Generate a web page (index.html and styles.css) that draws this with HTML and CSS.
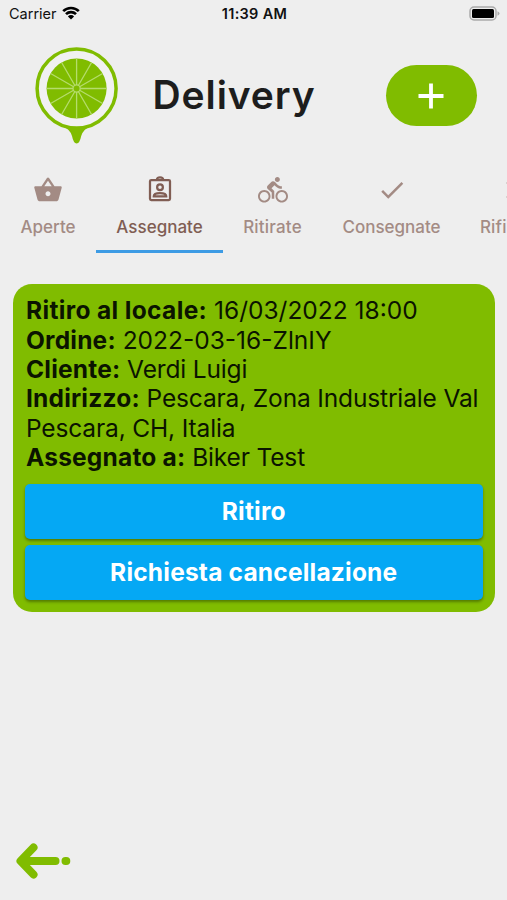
FILE: index.html
```html
<!DOCTYPE html>
<html lang="it">
<head>
    <meta charset="UTF-8">
    <title>Delivery</title>
    <link rel="stylesheet" href="styles.css">
</head>
<body>
    <div class="status-bar">
        <div class="carrier">
            <span>Carrier</span>
            <svg class="wifi" viewBox="0 0 18 14">
                <path d="M1.2 5.2a11 11 0 0 1 15.6 0M4 8.2a7 7 0 0 1 10 0"/>
                <path class="wifi-dot" d="M9 13.6L5.9 10.4a4.4 4.4 0 0 1 6.2 0z"/>
            </svg>
        </div>
        <div class="time">11:39 AM</div>
        <svg class="battery" viewBox="0 0 31 15">
            <rect class="battery-case" x="1" y="1" width="26" height="13" rx="4"/>
            <rect x="3" y="3" width="22" height="9" rx="1.5"/>
            <path class="battery-tip" d="M28.5 5.2q2 .8 2 2.3t-2 2.3z"/>
        </svg>
    </div>

    <header class="header">
        <svg class="logo" viewBox="0 0 84 98">
            <path class="lime" d="M28 79q8 3 10 10 1.500 7.500 4.600 7.500t4.600-7.500q2-7 10-10z"/>
            <circle class="logo-ring" cx="42.600" cy="41.500" r="39.500"/>
            <circle class="lime" cx="42.600" cy="41.500" r="30"/>
            <g class="slices">
                <path d="M42.600 11.500v60M12.600 41.500h60M27.600 15.500l30 52M57.600 15.500l-30 52M16.600 26.500l52 30M16.600 56.500l52-30"/>
                <circle class="lime" cx="42.600" cy="41.500" r="3.600"/>
            </g>
        </svg>
        <h1>Delivery</h1>
        <button class="add" aria-label="Aggiungi">
            <svg viewBox="0 0 26 26"><path d="M13 .5v25M.5 13h25"/></svg>
        </button>
    </header>

    <nav class="tabs">
        <a class="tab tab-aperte">
            <svg viewBox="0 0 24 24"><path d="M17.210 9l-4.380-6.560c-.19-.28-.51-.42-.83-.42-.32 0-.64.14-.83.43L6.790 9H2c-.55 0-1 .45-1 1 0 .09.010.18.040.27l2.540 9.270c.23.84 1 1.460 1.920 1.460h13c.92 0 1.690-.62 1.930-1.460l2.540-9.270L23 10c0-.55-.45-1-1-1h-4.790zM9 9l3-4.400L15 9H9zm3 8c-1.100 0-2-.9-2-2s.9-2 2-2 2 .9 2 2-.9 2-2 2z"/></svg>
            <span>Aperte</span>
        </a>
        <a class="tab tab-assegnate active">
            <svg class="outline" viewBox="0 0 24 24">
                <rect x="4" y="4" width="16" height="16" rx="1"/>
                <path d="M9.500 3.800a2.500 2 0 0 1 5 0"/>
                <circle cx="12" cy="9.700" r="2.300"/>
                <path d="M7 17c0-3.400 10-3.400 10 0z"/>
            </svg>
            <span>Assegnate</span>
        </a>
        <a class="tab tab-ritirate">
            <svg viewBox="0 0 24 24"><path d="M15.500 5.500c1.100 0 2-.9 2-2s-.9-2-2-2-2 .9-2 2 .9 2 2 2zM5 12c-2.800 0-5 2.200-5 5s2.200 5 5 5 5-2.200 5-5-2.200-5-5-5zm0 8.500c-1.900 0-3.500-1.600-3.500-3.500s1.600-3.500 3.500-3.500 3.500 1.600 3.500 3.500-1.600 3.500-3.500 3.500zm5.800-10l2.400-2.400.8.8c1.300 1.300 3 2.100 5.100 2.100V9c-1.500 0-2.700-.6-3.600-1.500l-1.900-1.900c-.5-.4-1-.6-1.600-.6s-1.100.2-1.400.6L7.800 8.400c-.4.4-.6.9-.6 1.400 0 .6.2 1.100.6 1.400L11 14v5h2v-6.200l-2.200-2.300zM19 12c-2.800 0-5 2.200-5 5s2.200 5 5 5 5-2.200 5-5-2.200-5-5-5zm0 8.500c-1.900 0-3.500-1.600-3.500-3.500s1.600-3.500 3.500-3.500 3.500 1.600 3.500 3.500-1.600 3.500-3.500 3.500z"/></svg>
            <span>Ritirate</span>
        </a>
        <a class="tab tab-consegnate">
            <svg viewBox="0 0 24 24"><path d="M9 16.170L4.830 12l-1.420 1.410L9 19 21 7l-1.410-1.410z"/></svg>
            <span>Consegnate</span>
        </a>
        <a class="tab tab-rifiutate">
            <svg viewBox="0 0 24 24"><path d="M19 6.410L17.590 5 12 10.590 6.410 5 5 6.410 10.590 12 5 17.590 6.410 19 12 13.410 17.590 19 19 17.590 13.410 12z"/></svg>
            <span>Rifiutate</span>
        </a>
    </nav>

    <div class="card">
        <div class="info">
            <p class="ritiro"><b>Ritiro al locale:</b> 16/03/2022 18:00</p>
            <p class="ordine"><b>Ordine:</b> 2022-03-16-ZlnIY</p>
            <p class="cliente"><b>Cliente:</b> Verdi Luigi</p>
            <p class="indirizzo"><b>Indirizzo:</b> Pescara, Zona Industriale Val<br>Pescara, CH, Italia</p>
            <p class="assegnato"><b>Assegnato a:</b> Biker Test</p>
        </div>
        <button class="action">Ritiro</button>
        <button class="action">Richiesta cancellazione</button>
    </div>

    <footer class="footer">
        <svg class="back" viewBox="0 0 56 36">
            <path d="M17.500 4.500L4.500 18l13 13.500M5 18h34.500M49.500 18h.8"/>
        </svg>
    </footer>
</body>
</html>
```

FILE: styles.css
```css
body {
    margin: 0;
    width: 507px;
    height: 900px;
    display: flex;
    flex-direction: column;
    overflow: hidden;
    background-color: #eeeeee;
    font-family: Inter, "Liberation Sans", sans-serif;
    color: #111;
}

svg {
    display: block;
}

button {
    border: none;
    padding: 0;
    font-family: inherit;
    color: white;
}

.status-bar {
    box-sizing: border-box;
    height: 27px;
    padding: 0 7px 0 9px;
    display: grid;
    grid-template-columns: 1fr auto 1fr;
    align-items: center;
    font-size: 14.5px;
}

.carrier {
    display: flex;
    align-items: center;
    gap: 5px;
}

.wifi {
    width: 18px;
    height: 14px;
    margin-top: -2px;
    fill: none;
    stroke: #000;
    stroke-width: 2.6;
}

.wifi .wifi-dot {
    fill: #000;
    stroke: none;
}

.time {
    font-weight: 600;
    letter-spacing: 0.3px;
}

.battery {
    width: 31px;
    height: 15px;
    justify-self: end;
}

.battery-case {
    fill: none;
    stroke: #aaa;
    stroke-width: 1.5;
}

.battery-tip {
    fill: #aaa;
}

.header {
    height: 137px;
    padding: 0 30.5px 0 34px;
    display: flex;
    align-items: center;
}

.logo {
    width: 84px;
    height: 98px;
}

.lime {
    fill: #80bc00;
}

.logo-ring {
    fill: #f1f1f1;
    stroke: #80bc00;
    stroke-width: 3.5;
}

.slices {
    stroke: #b5dc6c;
    stroke-width: 1.3;
}

h1 {
    margin: -2px auto 0 34.5px;
    font-size: 39px;
    font-weight: 600;
    line-height: 48px;
    letter-spacing: 0.9px;
    color: #1d1d1d;
}

.add {
    width: 91px;
    height: 61px;
    display: flex;
    align-items: center;
    justify-content: center;
    background-color: #80bc00;
    border-radius: 31px;
}

.add svg {
    width: 26px;
    height: 26px;
    stroke: white;
    stroke-width: 3.8;
}

.tabs {
    height: 89px;
    display: flex;
}

.tab {
    box-sizing: border-box;
    flex: none;
    display: flex;
    flex-direction: column;
    align-items: center;
    gap: 10px;
    padding-top: 11px;
    border-bottom: 3px solid transparent;
    font-size: 17px;
    font-weight: 500;
    line-height: 24px;
    color: #a38b84;
}

.tab svg {
    width: 30px;
    height: 30px;
    fill: currentColor;
}

.tab .outline {
    fill: none;
    stroke: currentColor;
    stroke-width: 1.8;
}

.tab.active {
    color: #805d53;
    border-bottom-color: #3d9be4;
}

.tab-aperte {
    width: 96px;
}

.tab-assegnate {
    width: 127px;
}

.tab-ritirate {
    width: 99px;
    letter-spacing: 0.2px;
}

.tab-consegnate {
    width: 139px;
}

.tab-rifiutate {
    width: 107px;
    letter-spacing: 0.2px;
}

.card {
    box-sizing: border-box;
    width: 481.5px;
    height: 328px;
    margin: 31px 0 0 13px;
    padding: 12px;
    display: flex;
    flex-direction: column;
    gap: 6px;
    background-color: #80bc00;
    border-radius: 19px;
}

.info {
    box-sizing: border-box;
    height: 182px;
    padding: 0.2px 0 0 1px;
    font-size: 24.5px;
    line-height: 29.35px;
    color: #0b1400;
    white-space: nowrap;
}

.info p {
    margin: 0;
}

.info b {
    letter-spacing: 0.2px;
}

.info .ritiro b {
    letter-spacing: 0.35px;
}

.cliente,
.indirizzo,
.assegnato {
    letter-spacing: -0.15px;
}

.action {
    height: 55px;
    padding-bottom: 2px;
    background-color: #05a8f4;
    border-radius: 5px;
    box-shadow: 0 2px 3px rgba(0, 0, 0, 0.35);
    font-size: 24.5px;
    font-weight: 700;
    letter-spacing: 0.2px;
}

.footer {
    margin-top: auto;
    padding: 0 15.5px 21.5px;
}

.back {
    width: 56px;
    height: 36px;
    fill: none;
    stroke: #80bc00;
    stroke-width: 8;
    stroke-linecap: round;
    stroke-linejoin: round;
}
```
